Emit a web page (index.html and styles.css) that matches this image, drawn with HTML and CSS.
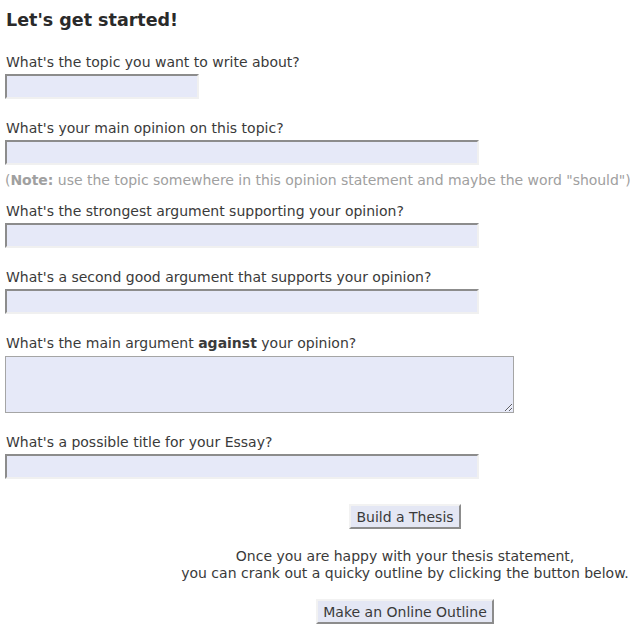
FILE: index.html
```html
<!DOCTYPE html>
<html lang="en">
<head>
    <meta charset="UTF-8">
    <meta name="viewport" content="width=device-width, initial-scale=1.0">
    <title>Thesis Builder</title>
    <link rel="stylesheet" href="styles.css">
</head>
<body>
    <!-- Essay questions -->
    <div class='form'>
        <h2 class='title'>Let's get started!</h2>

        <div class='field'>
            <label for='topic'>What's the topic you want to write about?</label>
            <input type='text' id='topic' class='input input-short' />
        </div>

        <div class='field field-note'>
            <label for='opinion'>What's your main opinion on this topic?</label>
            <input type='text' id='opinion' class='input' />
            <p class='note'>(<b>Note:</b> use the topic somewhere in this opinion statement and maybe the word "should")</p>
        </div>

        <div class='field'>
            <label for='arg1'>What's the strongest argument supporting your opinion?</label>
            <input type='text' id='arg1' class='input' />
        </div>

        <div class='field'>
            <label for='arg2'>What's a second good argument that supports your opinion?</label>
            <input type='text' id='arg2' class='input' />
        </div>

        <div class='field'>
            <label for='against'>What's the main argument <b>against</b> your opinion?</label>
            <textarea id='against' class='textarea'></textarea>
        </div>

        <div class='field'>
            <label for='essay-title'>What's a possible title for your Essay?</label>
            <input type='text' id='essay-title' class='input' />
        </div>
    </div>

    <!-- Buttons -->
    <div class='actions'>
        <button class='button'>Build a Thesis</button>
        <p class='hint'>Once you are happy with your thesis statement,<br>you can crank out a quicky outline by clicking the button below.</p>
        <button class='button'>Make an Online Outline</button>
    </div>
</body>
</html>
```

FILE: styles.css
```css
/* Page */
body {
    margin: 5px;
    font-family: "DejaVu Sans", Verdana, sans-serif;
    font-size: 14px;
    color: #3a3a3a;
    background: #fff;
}
.title {
    font-size: 17.5px;
    color: #2a2a2a;
    margin: 4px 0 23px 1px;
    line-height: 22px;
}

/* Fields */
.field {
    margin-bottom: 21px;
}
.field-note {
    margin-bottom: 14px;
}
label {
    display: block;
    line-height: 16px;
    margin-left: 1px;
}
.input, .textarea {
    display: block;
    box-sizing: border-box;
    width: 474px;
    height: 25px;
    margin: 4px 0 0 0;
    background: #e6e9f8;
    border: 2px solid #f0f0f0;
    border-top-color: #8c8c8c;
    border-left-color: #8c8c8c;
    font-family: inherit;
    font-size: 13px;
}
.input-short {
    width: 194px;
}
.textarea {
    width: 509px;
    height: 57px;
    margin-top: 5px;
    border: 1px solid #a5a5a5;
    resize: both;
}
.note {
    margin: 7px 0 0 0;
    line-height: 17px;
    color: #a0a0a0;
    white-space: nowrap;
    letter-spacing: -0.03px;
}

/* Buttons */
.actions {
    padding: 4px 0 0 175px;
    text-align: center;
}
.button {
    display: block;
    font-family: inherit;
    font-size: 14px;
    color: #3a3a3a;
    background: #e4e7f4;
    border: 2px solid #f2f2f2;
    border-right-color: #8c8c8c;
    border-bottom-color: #8c8c8c;
    padding: 1px 5px;
    height: 25px;
    margin: 0 auto;
}
.hint {
    margin: 19px 0 17px 0;
    line-height: 17px;
    white-space: nowrap;
}
```
